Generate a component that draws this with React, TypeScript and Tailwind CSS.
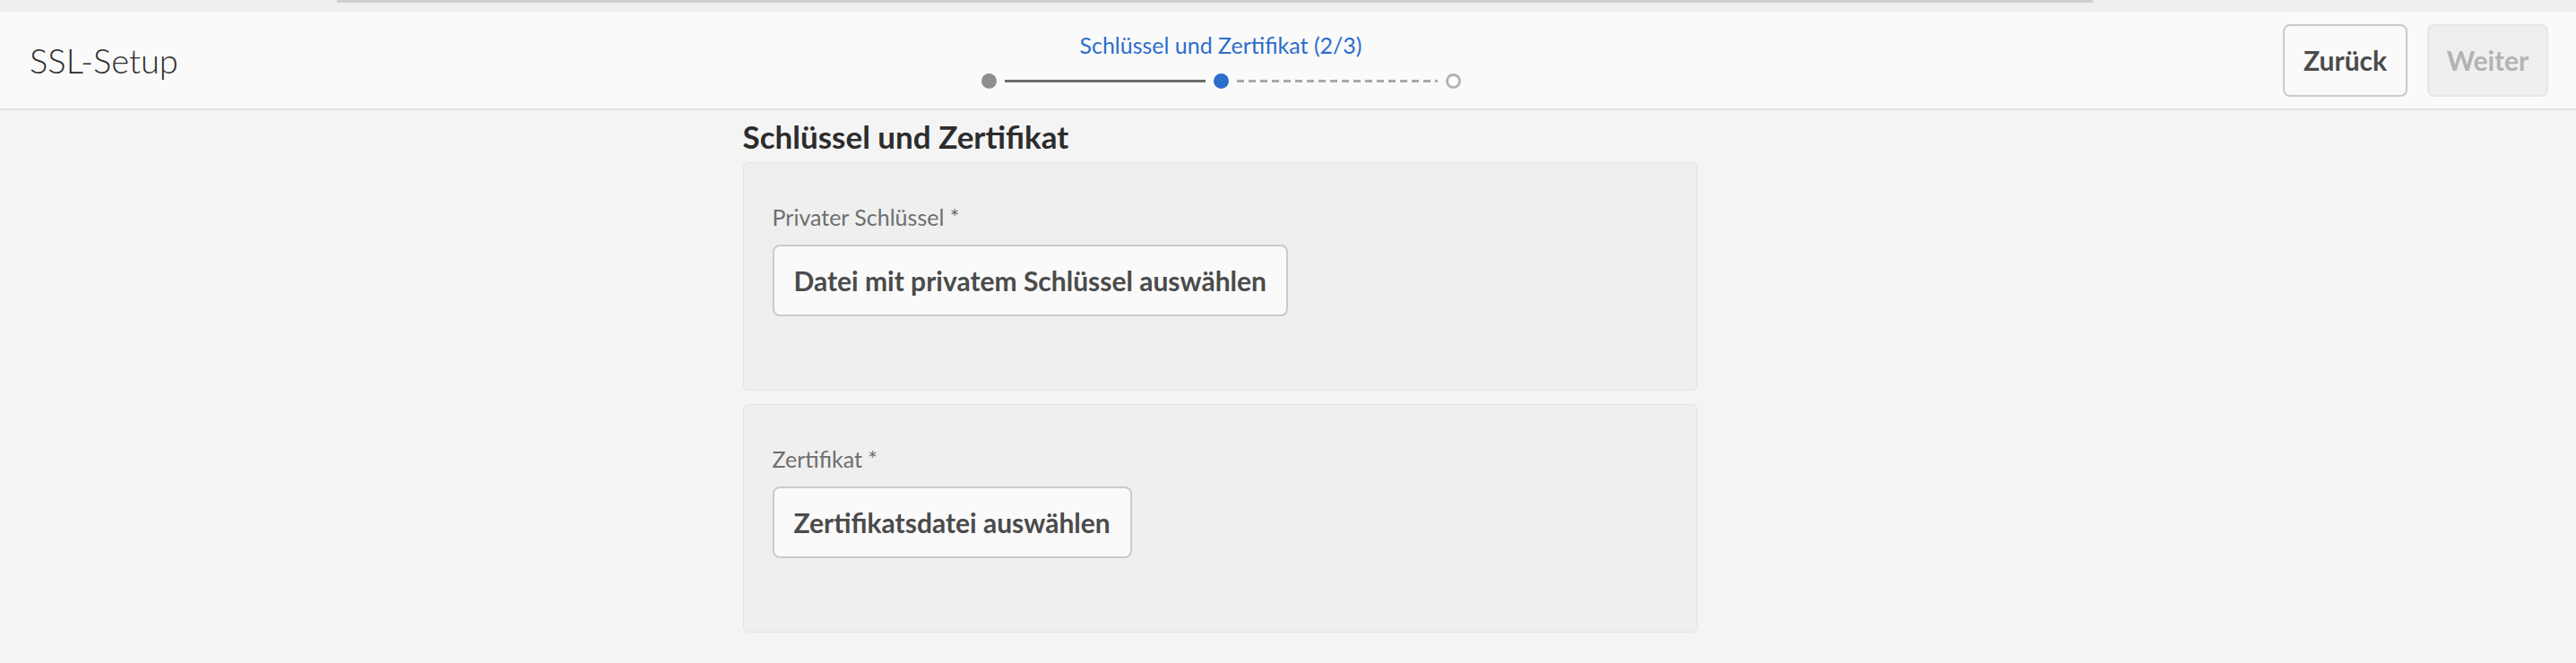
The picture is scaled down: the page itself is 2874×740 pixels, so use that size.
import React from 'react';

const font = { fontFamily: 'Lato, "Open Sans", sans-serif' };

const Stepper = () => {
  return (
    <div className="flex flex-col items-center">
      <div className="text-[25px] leading-[30px] text-[#2c6ecb]">Schlüssel und Zertifikat (2/3)</div>
      <div className="mt-[17px] flex items-center">
        <span className="w-[17px] h-[17px] rounded-full bg-[#8e8e8e]" />
        <span className="ml-[9px] mr-[9px] w-[224px] h-[3px] bg-[#6e6e6e]" />
        <span className="w-[17px] h-[17px] rounded-full bg-[#2c6ecb]" />
        <span className="ml-[9px] mr-[9px] w-[224px] h-[3px] bg-[repeating-linear-gradient(90deg,#a9a9a9_0_8px,transparent_8px_13px)]" />
        <span className="w-[17px] h-[17px] rounded-full border-[3px] border-[#b3b3b3] bg-white" />
      </div>
    </div>
  );
};

const FileField = ({ label, action }: { label: string; action: string }) => {
  return (
    <div className="bg-[#efefef] border border-[#e4e4e4] rounded-[6px] pl-[32px] pt-[45px] pb-[82px]">
      <div className="text-[25px] leading-[30px] text-[#6e6e6e]">{label}</div>
      <button className="mt-[16px] h-[80px] px-[22px] rounded-[8px] border-2 border-[#cacaca] bg-[#fafafa] text-[30px] font-bold text-[#4b4b4b]">
        {action}
      </button>
    </div>
  );
};

const App = () => {
  return (
    <div className="min-h-screen bg-[#f4f4f4]" style={font}>
      {/* top strip */}
      <div className="h-[13px] bg-[#efefef]">
        <div className="ml-[376px] w-[1959px] h-[3px] bg-[#cfcfcf]" />
      </div>

      {/* header */}
      <header className="h-[110px] bg-[#fafafa] border-b-[2px] border-[#e1e1e1] flex items-center pl-[33px] pr-[31px]">
        <div className="flex-1">
          <h1 className="text-[38px] font-light text-[#2c2c2c] leading-none">SSL-Setup</h1>
        </div>
        <Stepper />
        <div className="flex-1 pl-[152px] flex justify-end gap-[22px]">
          <button className="h-[81px] w-[139px] rounded-[8px] border-2 border-[#cacaca] bg-[#fafafa] text-[30px] font-bold text-[#4b4b4b]">
            Zurück
          </button>
          <button className="h-[81px] w-[135px] rounded-[8px] border-2 border-[#e6e6e6] bg-[#efefef] text-[30px] font-bold text-[#b3b3b3]">
            Weiter
          </button>
        </div>
      </header>

      {/* content */}
      <main className="pr-[152px]">
        <div className="w-[1065px] mx-auto">
          <h2 className="mt-[8px] text-[35px] leading-[42px] font-bold text-[#2c2c2c]">Schlüssel und Zertifikat</h2>
          <div className="mt-[8px] flex flex-col gap-[15px]">
            <FileField label="Privater Schlüssel *" action="Datei mit privatem Schlüssel auswählen" />
            <FileField label="Zertifikat *" action="Zertifikatsdatei auswählen" />
          </div>
        </div>
      </main>
    </div>
  );
};

export default App;
